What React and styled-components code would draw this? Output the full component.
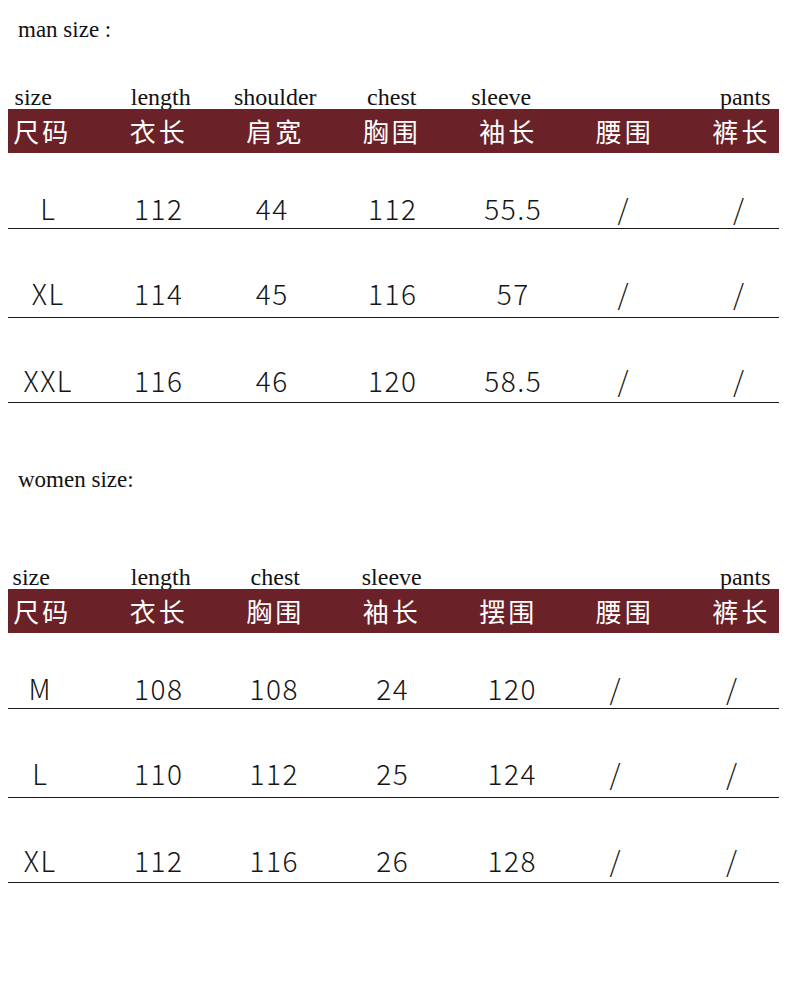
import React from "react";
import styled, { createGlobalStyle } from "styled-components";

const COLUMN = 116.5;

// nudges are shifts (px) of a column's text from the column centre
const MAN = {
  title: "man size :",
  labels: ["size", "length", "shoulder", "chest", "sleeve", "", "pants"],
  labelNudge: [-9, 2, 0, 0, -7, 0, 4],
  heads: ["尺码", "衣长", "肩宽", "胸围", "袖长", "腰围", "裤长"],
  rows: [
    ["L", "112", "44", "112", "55.5", "/", "/"],
    ["XL", "114", "45", "116", "57", "/", "/"],
    ["XXL", "116", "46", "120", "58.5", "/", "/"],
  ],
  cellNudge: [6, 0, -3, 1, 5, -1, -2],
};

const WOMEN = {
  title: "women size:",
  labels: ["size", "length", "chest", "sleeve", "", "", "pants"],
  labelNudge: [-11, 2, 0, 0, 0, 0, 4],
  heads: ["尺码", "衣长", "胸围", "袖长", "摆围", "腰围", "裤长"],
  rows: [
    ["M", "108", "108", "24", "120", "/", "/"],
    ["L", "110", "112", "25", "124", "/", "/"],
    ["XL", "112", "116", "26", "128", "/", "/"],
  ],
  cellNudge: [-2, 0, -1, 1, 4, -9, -9],
};

// row heights (incl. bottom rule) and space under the numbers
const ROW_SPECS = [
  { height: 76, bottom: 6 },
  { height: 89, bottom: 10 },
  { height: 85, bottom: 8 },
];

const App = () => (
  <>
    <GlobalStyle />
    <Page>
      <SizeTable data={MAN} gap={18} titleGap={38} />
      <SizeTable data={WOMEN} gap={65} titleGap={68} />
    </Page>
  </>
);

const SizeTable = ({ data, gap, titleGap }) => (
  <Section $gap={gap}>
    <Title $gap={titleGap}>{data.title}</Title>

    <LabelStrip>
      <Columns $align="end">
        {data.labels.map((l, i) => (
          <Label key={i} $nudge={data.labelNudge[i]}>
            {l}
          </Label>
        ))}
      </Columns>
    </LabelStrip>

    <HeadBar>
      <Columns $align="center">
        {data.heads.map((h) => (
          <Head key={h}>{h}</Head>
        ))}
      </Columns>
    </HeadBar>

    {data.rows.map((row, r) => (
      <DataRow key={r} $height={ROW_SPECS[r].height} $bottom={ROW_SPECS[r].bottom}>
        <Columns $align="end">
          {row.map((v, i) => (
            <Cell key={i} $nudge={data.cellNudge[i]}>
              {v}
            </Cell>
          ))}
        </Columns>
      </DataRow>
    ))}
  </Section>
);

export default App;

/* ======================
   Styled components
   ====================== */

const GlobalStyle = createGlobalStyle`
  html, body {
    margin: 0;
    padding: 0;
    background: #fff;
    overflow-x: hidden;
  }
  body {
    font-family: "Liberation Serif", "Times New Roman", serif;
    color: #111;
  }
`;

const Page = styled.main`
  width: 771px;
  margin: 0 0 0 8px;
  padding-bottom: 99px;
`;

const Section = styled.section`
  padding-top: ${(p) => p.$gap}px;
`;

const Title = styled.div`
  font-family: "Liberation Serif", "Times New Roman", serif;
  font-size: 23px;
  line-height: 24px;
  padding-left: 10px;
  margin-bottom: ${(p) => p.$gap}px;
  color: #111;
`;

/* shared 7-column grid, first column centred at x=42 */
const Columns = styled.div`
  display: grid;
  grid-template-columns: repeat(7, ${COLUMN}px);
  justify-items: center;
  align-items: ${(p) => p.$align};
  height: 100%;
  margin-left: -24px;
`;

// centred items: a margin of 2n moves the text by n
const nudge = (p) =>
  p.$nudge > 0 ? `margin-left: ${p.$nudge * 2}px;` : `margin-right: ${-(p.$nudge || 0) * 2}px;`;

const LabelStrip = styled.div`
  height: 29px;
  overflow: hidden;
`;

const Label = styled.span`
  font-family: "Liberation Serif", "Times New Roman", serif;
  font-size: 24px;
  line-height: 24px;
  color: #111;
  white-space: nowrap;
  ${nudge}
`;

const HeadBar = styled.div`
  height: 44px;
  background: #6a2128;
  overflow: hidden;
`;

const Head = styled.span`
  font-family: "Noto Sans CJK SC", "Noto Sans", sans-serif;
  font-size: 26px;
  line-height: 44px;
  letter-spacing: 3px;
  color: #fff;
  white-space: nowrap;
`;

const DataRow = styled.div`
  box-sizing: border-box;
  height: ${(p) => p.$height}px;
  padding-bottom: ${(p) => p.$bottom}px;
  border-bottom: 1px solid #1a1a1a;
  overflow: hidden;
`;

const Cell = styled.span`
  font-family: "Noto Sans CJK SC", "Noto Sans", sans-serif;
  font-weight: 300;
  font-size: 28px;
  line-height: 28px;
  letter-spacing: 1.5px;
  color: #151515;
  white-space: nowrap;
  ${nudge}
`;
